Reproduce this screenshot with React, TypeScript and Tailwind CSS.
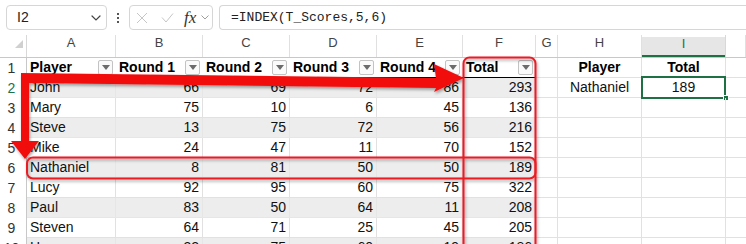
import clsx from "clsx";

const GRID =
  "grid grid-cols-[27px_89px_87px_87px_87px_86px_73px_22px_84px_84px_1fr]";

const LETTERS = ["A", "B", "C", "D", "E", "F", "G", "H", "I", ""];

const PLAYERS: [string, number, number, number, number, number][] = [
  ["John", 66, 69, 72, 86, 293],
  ["Mary", 75, 10, 6, 45, 136],
  ["Steve", 13, 75, 72, 56, 216],
  ["Mike", 24, 47, 11, 70, 152],
  ["Nathaniel", 8, 81, 50, 50, 189],
  ["Lucy", 92, 95, 60, 75, 322],
  ["Paul", 83, 50, 64, 11, 208],
  ["Steven", 64, 71, 25, 45, 205],
  ["Harry", 32, 75, 60, 19, 186],
];

const Chevron = ({ color = "#444", size = 10 }: { color?: string; size?: number }) => (
  <svg width={size} height={size * 0.6} viewBox="0 0 10 6" fill="none">
    <path d="M1 1l4 4 4-4" stroke={color} strokeWidth="1.2" strokeLinecap="round" />
  </svg>
);

const FilterButton = () => (
  <div className="flex h-[15px] w-[15px] shrink-0 items-center justify-center rounded-[2px] border border-[#c3c3c3] bg-[#fafafa]">
    <svg width="8" height="5" viewBox="0 0 8 5">
      <path d="M0 0h8L4 5z" fill="#6b6b6b" />
    </svg>
  </div>
);

const FormulaBar = () => (
  <div className="flex h-[35px] items-start pt-[5px]">
    {/* Name box */}
    <div className="ml-[6px] flex h-[25px] w-[101px] items-center justify-between rounded-[4px] border border-[#d6d6d6] pl-[10px] pr-[5px]">
      <span className="text-[14px] text-[#222]">I2</span>
      <Chevron />
    </div>

    {/* Dots */}
    <div className="flex h-[25px] w-[22px] flex-col items-center justify-center gap-[2px]">
      <span className="h-[2px] w-[2px] bg-[#555]" />
      <span className="h-[2px] w-[2px] bg-[#555]" />
      <span className="h-[2px] w-[2px] bg-[#555]" />
    </div>

    {/* Cancel / enter / fx */}
    <div className="flex h-[25px] w-[84px] items-center rounded-[4px] border border-[#d6d6d6] pl-[6px]">
      <svg width="12" height="12" viewBox="0 0 12 12" fill="none">
        <path d="M1 1l10 10M11 1L1 11" stroke="#c6c6c6" strokeWidth="1" />
      </svg>
      <svg className="ml-[13px]" width="13" height="10" viewBox="0 0 13 10" fill="none">
        <path d="M1 4.5l4 4.5 7-8.5" stroke="#c6c6c6" strokeWidth="1" />
      </svg>
      <span className="ml-[10px] font-['Liberation_Serif',serif] text-[17px] italic leading-none text-[#333]">
        fx
      </span>
      <span className="ml-[5px]">
        <Chevron color="#9a9a9a" size={8} />
      </span>
    </div>

    {/* Formula input */}
    <div className="ml-[6px] flex h-[25px] flex-1 items-center rounded-l-[4px] border border-r-0 border-[#d6d6d6] pl-[11px]">
      <span className="font-['Liberation_Mono',monospace] text-[13px] text-[#222]">
        =INDEX(T_Scores,5,6)
      </span>
    </div>
  </div>
);

const ColumnHeaders = () => (
  <div className={clsx(GRID, "h-[23px] border-b border-[#c8c8c8]")}>
    <div className="relative border-r border-[#d8d8d8]">
      <svg className="absolute left-[15px] top-[5px]" width="8" height="8" viewBox="0 0 8 8">
        <path d="M8 0v8H0z" fill="#d0d0d0" />
      </svg>
    </div>
    {LETTERS.map((l, i) =>
      l === "I" ? (
        <div key={i} className="flex flex-col border-r border-[#d8d8d8]">
          <div className="mt-[2px] flex flex-1 items-start justify-center border-b-2 border-[#1e7145] bg-[#e6e6e6] text-[13px] leading-[13px] text-[#1e7145]">
            I
          </div>
        </div>
      ) : (
        <div
          key={i}
          className="flex items-start justify-center border-r border-[#e0e0e0] pt-[1px] text-[13px] leading-[13px] text-[#444]"
        >
          {l}
        </div>
      )
    )}
  </div>
);

const RowNum = ({ n, active }: { n: number; active?: boolean }) => (
  <div
    className={clsx(
      "flex h-[20px] items-center justify-center border-r border-[#c8c8c8] pr-[3px] text-[14px]",
      active ? "text-[#1e7145]" : "text-[#333]"
    )}
  >
    {n}
  </div>
);

const HeaderRow = () => (
  <div className={GRID}>
    <RowNum n={1} />
    {["Player", "Round 1", "Round 2", "Round 3", "Round 4", "Total"].map((h) => (
      <div
        key={h}
        className="flex h-[20px] items-center justify-between border-b border-black bg-white pl-[3px] pr-[3px] text-[14px] font-bold text-black"
      >
        <span>{h}</span>
        <FilterButton />
      </div>
    ))}
    <div className="border-b border-r border-[#e1e1e1]" />
    <div className="flex h-[20px] items-center justify-center border-b border-r border-[#e1e1e1] text-[14px] font-bold text-black">
      Player
    </div>
    <div className="flex h-[20px] items-center justify-center border-b border-r border-[#e1e1e1] text-[14px] font-bold text-black">
      Total
    </div>
    <div className="border-b border-[#e1e1e1]" />
  </div>
);

const DataRow = ({
  n,
  row,
}: {
  n: number;
  row: [string, number, number, number, number, number];
}) => {
  const band = n % 2 === 0 ? "bg-[#ededed] border-[#e6e6e6]" : "bg-white border-[#e1e1e1]";
  const isSecond = n === 2;
  return (
    <div className={GRID}>
      <RowNum n={n} active={isSecond} />
      {row.map((v, i) => (
        <div
          key={i}
          className={clsx(
            "flex h-[20px] items-center border-b border-r px-[3px] text-[14px] text-[#111]",
            band,
            i === 0 ? "justify-start" : "justify-end"
          )}
        >
          {v}
        </div>
      ))}
      <div className="h-[20px] border-b border-r border-[#e1e1e1]" />
      <div className="flex h-[20px] items-center justify-center border-b border-r border-[#e1e1e1] text-[14px] text-[#111]">
        {isSecond ? "Nathaniel" : ""}
      </div>
      <div className="relative flex h-[20px] items-center justify-center border-b border-r border-[#e1e1e1] text-[14px] text-[#111]">
        {isSecond && (
          <>
            <div className="absolute -left-[1px] -top-[2px] bottom-[-2px] right-[-1px] border-2 border-[#1e7145]" />
            <div className="absolute -bottom-[4px] -right-[4px] h-[6px] w-[6px] border border-white bg-[#1e7145]" />
            189
          </>
        )}
      </div>
      <div className="h-[20px] border-b border-[#e1e1e1]" />
    </div>
  );
};

const Overlay = () => (
  <svg className="pointer-events-none absolute left-0 top-0" width="746" height="244">
    <defs>
      <filter id="shadow" x="-10%" y="-10%" width="120%" height="130%">
        <feDropShadow dx="1" dy="2" stdDeviation="1.6" floodColor="#000" floodOpacity="0.35" />
      </filter>
    </defs>
    <g filter="url(#shadow)">
      <rect x="463.5" y="57.5" width="72" height="210" rx="6" fill="none" stroke="#ec1c24" strokeWidth="2" />
      <rect x="27" y="157.5" width="508.5" height="21" rx="6" fill="none" stroke="#ec1c24" strokeWidth="2" />
      <path
        d="M21 73 L436 78 L434 64 L464 78 L434 92 L436 88 L29 83 L29 141 L39 141 L25 159 L11 141 L21 141 Z"
        fill="#f21010"
      />
    </g>
  </svg>
);

export default function App() {
  return (
    <div className="relative h-[244px] w-[746px] overflow-hidden bg-white font-['Liberation_Sans',Arial,sans-serif]">
      <FormulaBar />
      <ColumnHeaders />
      <HeaderRow />
      {PLAYERS.map((row, i) => (
        <DataRow key={row[0]} n={i + 2} row={row} />
      ))}
      <Overlay />
    </div>
  );
}
